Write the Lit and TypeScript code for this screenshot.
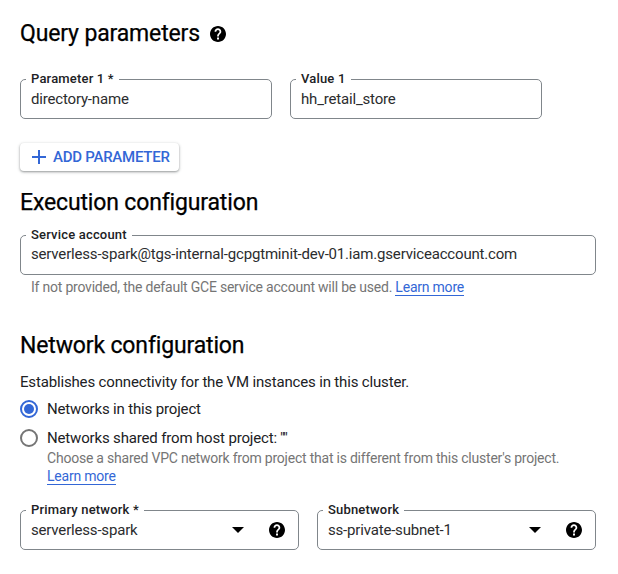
import { LitElement, html, css, svg, nothing } from "lit";
import { customElement, property } from "lit/decorators.js";

@customElement("help-icon")
class HelpIcon extends LitElement {
  static styles = css`
    :host { display: block; width: 20px; height: 20px; flex: none; }
    svg { display: block; width: 100%; height: 100%; }
  `;
  render() {
    return html`<svg viewBox="-0.5 -0.5 25 25">${svg`<path fill="#000" d="M12 2C6.480 2 2 6.480 2 12s4.480 10 10 10 10-4.480 10-10S17.520 2 12 2zm1.250 17h-2.500v-2.500h2.500V19zm1.840-7.500-.9.920C13.450 13.150 13.100 13.750 13.100 15.100h-2.200v-.500c0-1.100.45-2.100 1.170-2.830l1.240-1.260c.37-.36.59-.86.59-1.410 0-1.100-.9-2-2-2s-2 .9-2 2H7.700c0-2.310 1.890-4.150 4.200-4.150s4.200 1.840 4.200 4.150c0 .930-.38 1.770-1.010 2.400z"/>`}</svg>`;
  }
}

@customElement("outlined-field")
class OutlinedField extends LitElement {
  @property() label = "";
  @property() value = "";
  @property({ type: Boolean }) select = false;

  static styles = css`
    :host { display: block; }
    .box {
      position: relative; box-sizing: border-box; height: 40px;
      border: 1px solid #80868b; border-radius: 5px;
      display: flex; align-items: center; padding: 0 11px 0 10px;
    }
    .label {
      position: absolute; left: 5px; top: -9px; padding: 0 5px; background: #fff;
      font-size: 13px; line-height: 16px; font-weight: 500; letter-spacing: 0.18px;
      color: #202124; white-space: nowrap;
    }
    .value { flex: 1; font-size: 15px; line-height: 20px; letter-spacing: -0.18px; color: #2b2c2e; white-space: nowrap; }
    :host(.account) .value { padding-bottom: 2px; }
    .arrow { width: 12px; height: 6px; margin-right: 23px; flex: none; }
  `;
  render() {
    return html`<div class="box">
      <span class="label">${this.label}</span>
      <span class="value">${this.value}</span>
      ${this.select
        ? html`<svg class="arrow" viewBox="0 0 12 6"><path d="M0 0h12L6 6z" /></svg><help-icon></help-icon>`
        : nothing}
    </div>`;
  }
}

@customElement("app-root")
class AppRoot extends LitElement {
  static styles = css`
    :host {
      display: block; box-sizing: border-box; height: 574px; padding: 19px 22px 0 20px;
      background: #fff; font-family: Roboto, sans-serif; color: #202124; overflow: hidden;
    }
    h2 { margin: 0; font-size: 23px; line-height: 30px; font-weight: 400; letter-spacing: -0.15px; color: #000; -webkit-text-stroke: 0.25px #000; white-space: nowrap; }
    .title { display: flex; align-items: center; gap: 8px; }
    .row { display: flex; gap: 18px; }
    .params { margin-top: 30px; }
    .params outlined-field { width: 252px; }
    .add {
      margin: 24px 0 0; width: 159px; height: 28px; box-sizing: border-box; padding: 0 0 0 12px;
      display: flex; align-items: center; gap: 7px; border: 0; border-radius: 4px; background: #fff;
      box-shadow: 0 1px 2px rgba(60, 64, 67, 0.4), 0 1px 3px 1px rgba(60, 64, 67, 0.14);
      color: #3367d6; font: 500 15px/20px Roboto, sans-serif; letter-spacing: -0.25px; white-space: nowrap;
    }
    .add svg { width: 14px; height: 14px; flex: none; }
    .execution { margin-top: 17px; }
    .account { margin-top: 17px; }
    .hint { font-size: 14px; line-height: 18px; letter-spacing: -0.22px; color: #757575; white-space: nowrap; }
    .account-hint { margin: 3px 0 0 11px; }
    .link { color: #3367d6; border-bottom: 1px solid #3367d6; }
    .network { margin-top: 35px; }
    .text { font-size: 15px; line-height: 20px; letter-spacing: -0.16px; white-space: nowrap; }
    .shared { display: flex; }
    .caption { width: 233px; }
    .quotes { letter-spacing: -1px; }
    .intro { margin-top: 11px; }
    .radio { display: flex; align-items: center; gap: 9px; }
    .radio svg { width: 18px; height: 18px; flex: none; }
    .first { margin-top: 7px; }
    .second { margin-top: 9px; }
    .shared-hint { margin-left: 27px; margin-top: 1px; }
    .selects { margin-top: 25px; }
    .selects outlined-field { flex: 1; }
  `;
  render() {
    return html`
      <div class="title"><h2>Query parameters</h2><help-icon></help-icon></div>
      <div class="row params">
        <outlined-field label="Parameter 1 *" value="directory-name"></outlined-field>
        <outlined-field label="Value 1" value="hh_retail_store"></outlined-field>
      </div>
      <button class="add">
        <svg viewBox="0 0 14 14"><path d="M7 0v14M0 7h14" fill="none" stroke="#3367d6" stroke-width="2" /></svg>
        <span>ADD PARAMETER</span>
      </button>

      <h2 class="execution">Execution configuration</h2>
      <outlined-field class="account" label="Service account"
        value="serverless-spark@tgs-internal-gcpgtminit-dev-01.iam.gserviceaccount.com"></outlined-field>
      <div class="hint account-hint">If not provided, the default GCE service account will be used. <span class="link">Learn more</span></div>

      <h2 class="network">Network configuration</h2>
      <div class="text intro">Establishes connectivity for the VM instances in this cluster.</div>
      <div class="radio first">
        <svg viewBox="0 0 18 18"><circle cx="9" cy="9" r="8" fill="none" stroke="#3367d6" stroke-width="2" /><circle cx="9" cy="9" r="5" fill="#3367d6" /></svg>
        <span class="text">Networks in this project</span>
      </div>
      <div class="radio second">
        <svg viewBox="0 0 18 18"><circle cx="9" cy="9" r="8" fill="none" stroke="#757575" stroke-width="2" /></svg>
        <span class="text shared"><span class="caption">Networks shared from host project:</span><span class="quotes">""</span></span>
      </div>
      <div class="hint shared-hint">Choose a shared VPC network from project that is different from this cluster's project.<br /><span class="link">Learn more</span></div>
      <div class="row selects">
        <outlined-field select label="Primary network *" value="serverless-spark"></outlined-field>
        <outlined-field select label="Subnetwork" value="ss-private-subnet-1"></outlined-field>
      </div>
    `;
  }
}
